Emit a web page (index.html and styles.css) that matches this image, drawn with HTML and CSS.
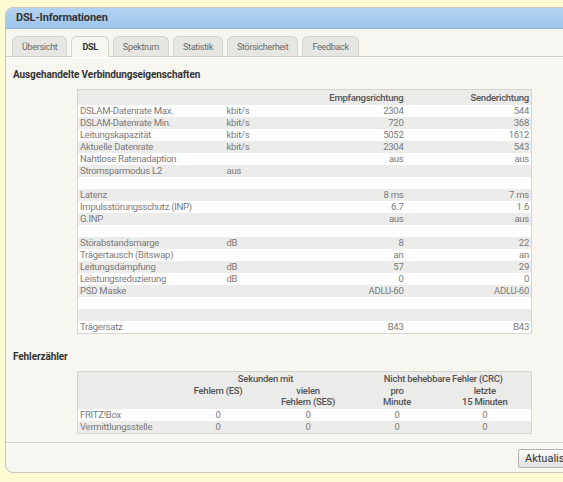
FILE: index.html
```html
<!DOCTYPE html>
<html lang="de">
<head>
    <meta charset="UTF-8">
    <meta name="viewport" content="width=device-width, initial-scale=1.0">
    <title>DSL-Informationen</title>
    <link rel="stylesheet" href="styles.css">
</head>
<body>

    <div class="panel">
        <div class="panel-head">DSL-Informationen</div>

        <div class="tabs">
            <span class="tab">Übersicht</span>
            <span class="tab active">DSL</span>
            <span class="tab">Spektrum</span>
            <span class="tab">Statistik</span>
            <span class="tab">Störsicherheit</span>
            <span class="tab">Feedback</span>
        </div>

        <div class="content">
            <h2>Ausgehandelte Verbindungseigenschaften</h2>
            <table class="props">
                <colgroup>
                    <col class="c-label">
                    <col class="c-unit">
                    <col class="c-down">
                    <col class="c-up">
                </colgroup>
                <thead>
                    <tr><th></th><th></th><th class="num">Empfangsrichtung</th><th class="num">Senderichtung</th></tr>
                </thead>
                <tbody>
                    <tr><td>DSLAM-Datenrate Max.</td><td>kbit/s</td><td class="num">2304</td><td class="num">544</td></tr>
                    <tr><td>DSLAM-Datenrate Min.</td><td>kbit/s</td><td class="num">720</td><td class="num">368</td></tr>
                    <tr><td>Leitungskapazität</td><td>kbit/s</td><td class="num">5052</td><td class="num">1612</td></tr>
                    <tr><td>Aktuelle Datenrate</td><td>kbit/s</td><td class="num">2304</td><td class="num">543</td></tr>
                    <tr><td>Nahtlose Ratenadaption</td><td></td><td class="num">aus</td><td class="num">aus</td></tr>
                    <tr><td>Stromsparmodus L2</td><td>aus</td><td></td><td></td></tr>
                    <tr><td></td><td></td><td></td><td></td></tr>
                    <tr><td>Latenz</td><td></td><td class="num">8 ms</td><td class="num">7 ms</td></tr>
                    <tr><td>Impulsstörungsschutz (INP)</td><td></td><td class="num">6.7</td><td class="num">1.6</td></tr>
                    <tr><td>G.INP</td><td></td><td class="num">aus</td><td class="num">aus</td></tr>
                    <tr><td></td><td></td><td></td><td></td></tr>
                    <tr><td>Störabstandsmarge</td><td>dB</td><td class="num">8</td><td class="num">22</td></tr>
                    <tr><td>Trägertausch (Bitswap)</td><td></td><td class="num">an</td><td class="num">an</td></tr>
                    <tr><td>Leitungsdämpfung</td><td>dB</td><td class="num">57</td><td class="num">29</td></tr>
                    <tr><td>Leistungsreduzierung</td><td>dB</td><td class="num">0</td><td class="num">0</td></tr>
                    <tr><td>PSD Maske</td><td></td><td class="num">ADLU-60</td><td class="num">ADLU-60</td></tr>
                    <tr><td></td><td></td><td></td><td></td></tr>
                    <tr><td></td><td></td><td></td><td></td></tr>
                    <tr><td>Trägersatz</td><td></td><td class="num">B43</td><td class="num">B43</td></tr>
                </tbody>
            </table>

            <h2>Fehlerzähler</h2>
            <table class="errors">
                <colgroup>
                    <col class="e-label">
                    <col class="e-es">
                    <col class="e-ses">
                    <col class="e-min">
                    <col class="e-15">
                </colgroup>
                <thead>
                    <tr><th></th><th colspan="2">Sekunden mit</th><th colspan="2">Nicht behebbare Fehler (CRC)</th></tr>
                    <tr class="sub"><th></th><th>Fehlern (ES)</th><th>vielen<br>Fehlern (SES)</th><th>pro<br>Minute</th><th>letzte<br>15 Minuten</th></tr>
                </thead>
                <tbody>
                    <tr><td>FRITZ!Box</td><td>0</td><td>0</td><td>0</td><td>0</td></tr>
                    <tr><td>Vermittlungsstelle</td><td>0</td><td>0</td><td>0</td><td>0</td></tr>
                </tbody>
            </table>
        </div>

        <div class="panel-foot">
            <button type="button">Aktualisieren</button>
        </div>
    </div>

</body>
</html>
```

FILE: styles.css
```css
html, body {
    overflow: hidden;
}

body {
    font-family: Roboto, "Liberation Sans", Arial, sans-serif;
    background-color: #fcfbd3;
    color: #333;
    margin: 0;
    padding: 7px 0 0 5px;
    height: 482px;
    box-sizing: border-box;
}

.panel {
    width: 620px;
    height: 466px;
    background-color: #f7f6f1;
    border: 1px solid #c6c6bd;
    border-radius: 8px 0 0 8px;
    box-sizing: border-box;
    display: flex;
    flex-direction: column;
    overflow: hidden;
}

.panel-head {
    height: 20px;
    line-height: 20px;
    padding-left: 10px;
    font-size: 11px;
    letter-spacing: -0.15px;
    font-weight: bold;
    color: #353535;
    background: linear-gradient(#b2d3f2, #9ec5ec);
    border-bottom: 1px solid #8eb4da;
}

.tabs {
    display: flex;
    gap: 4px;
    padding: 7px 0 0 6px;
    height: 20px;
    border-bottom: 1px solid #cfcfc8;
    box-shadow: 0 1px 0 #fff;
}

.tab {
    padding: 0 9px;
    height: 20px;
    line-height: 20px;
    font-size: 9px;
    letter-spacing: -0.3px;
    color: #6a6a6a;
    background-color: #e6e6e3;
    border: 1px solid #d2d2cc;
    border-bottom: none;
    border-radius: 6px 6px 0 0;
    box-sizing: border-box;
}

.tab.active {
    background-color: #f7f6f1;
    color: #2e2e2e;
    font-weight: bold;
    height: 21px;
    padding: 0 10px;
}

.content {
    flex: 1;
    padding: 12px 0 0 7px;
    border-bottom: 1px solid #cfcfc8;
    box-shadow: 0 1px 0 #fff;
}

h2 {
    font-size: 10px;
    letter-spacing: -0.1px;
    font-weight: bold;
    color: #333;
    margin: 0 0 8px 0;
    line-height: 12px;
}

table {
    border-collapse: collapse;
    margin-left: 64px;
    font-size: 9.5px;
    letter-spacing: -0.25px;
    color: #7a7a7a;
    border: 1px solid #d6d6d0;
    table-layout: fixed;
}

td, th {
    padding: 0 2px;
    height: 12px;
    line-height: 12px;
    white-space: nowrap;
}

th {
    font-weight: 500;
    color: #555;
    background-color: #ebebea;
}

.num {
    text-align: right;
}

.props {
    width: 454px;
    margin-bottom: 17px;
}

.props thead th {
    height: 14px;
    padding-top: 1px;
}

.c-label { width: 147px; }
.c-unit { width: 70px; }
.c-down { width: 111px; }
.c-up { width: 126px; }

.props tbody tr:nth-child(odd) td {
    background-color: #fff;
}

.props tbody tr:nth-child(even) td {
    background-color: #ececeb;
}

.errors {
    width: 454px;
}

.errors th {
    text-align: center;
    height: 13px;
    line-height: 11px;
}

.errors .sub th {
    height: 24px;
    vertical-align: top;
}

.errors td {
    text-align: center;
}

.errors td:first-child {
    text-align: left;
}

.e-label { width: 98px; }
.e-es { width: 85px; }
.e-ses { width: 95px; }
.e-min { width: 83px; }
.e-15 { width: 93px; }

.errors tbody tr:nth-child(odd) td {
    background-color: #fff;
}

.errors tbody tr:nth-child(even) td {
    background-color: #ececeb;
}

.panel-foot {
    height: 29px;
    padding: 4px 0 0 512px;
    box-sizing: border-box;
}

.panel-foot button {
    font-family: Roboto, "Liberation Sans", Arial, sans-serif;
    font-size: 11px;
    color: #333;
    height: 19px;
    padding: 0 6px;
    background: linear-gradient(#fbfbfb, #e2e2e2);
    border: 1px solid #b5b5b0;
    border-radius: 2px;
}
```
